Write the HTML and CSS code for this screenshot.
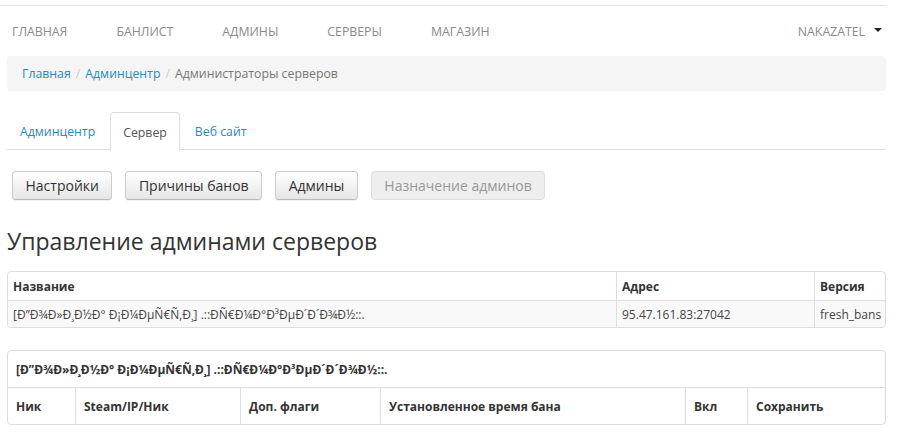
FILE: index.html
```html
<!DOCTYPE html>
<html lang="ru">
<head>
<meta charset="utf-8">
<title>Управление админами серверов</title>
<link rel="stylesheet" href="styles.css">
</head>
<body>
<div class="navbar">
  <ul class="nav-left">
    <li>ГЛАВНАЯ</li>
    <li>БАНЛИСТ</li>
    <li>АДМИНЫ</li>
    <li>СЕРВЕРЫ</li>
    <li>МАГАЗИН</li>
  </ul>
  <div class="nav-user">NAKAZATEL <span class="caret"></span></div>
</div>
<div class="page">
  <div class="breadcrumb">
    <a href="#">Главная</a><span class="sep">/</span><a href="#">Админцентр</a><span class="sep">/</span><span class="active">Администраторы серверов</span>
  </div>
  <ul class="tabs">
    <li><a href="#">Админцентр</a></li>
    <li class="on"><span>Сервер</span></li>
    <li><a href="#">Веб сайт</a></li>
  </ul>
  <div class="btns">
    <span class="btn">Настройки</span>
    <span class="btn">Причины банов</span>
    <span class="btn">Админы</span>
    <span class="btn disabled">Назначение админов</span>
  </div>
  <h1>Управление админами серверов</h1>
  <table class="t1">
    <colgroup><col class="c-name"><col class="c-addr"><col></colgroup>
    <thead>
      <tr><th>Название</th><th>Адрес</th><th>Версия</th></tr>
    </thead>
    <tbody>
      <tr><td>[Ð”Ð¾Ð»Ð¸Ð½Ð° Ð¡Ð¼ÐµÑ€Ñ‚Ð¸] .::ÐÑ€Ð¼Ð°Ð³ÐµÐ´Ð´Ð¾Ð½::.</td><td>95.47.161.83:27042</td><td>fresh_bans</td></tr>
    </tbody>
  </table>
  <div class="panel">
    <div class="panel-title">[Ð”Ð¾Ð»Ð¸Ð½Ð° Ð¡Ð¼ÐµÑ€Ñ‚Ð¸] .::ÐÑ€Ð¼Ð°Ð³ÐµÐ´Ð´Ð¾Ð½::.</div>
    <table class="t2">
      <tr>
        <th class="w1">Ник</th>
        <th class="w2">Steam/IP/Ник</th>
        <th class="w3">Доп. флаги</th>
        <th class="w4">Установленное время бана</th>
        <th class="w5">Вкл</th>
        <th>Сохранить</th>
      </tr>
    </table>
  </div>
</div>
</body>
</html>
```
FILE: styles.css
```css
html, body {
  margin: 0;
  padding: 0;
  background: #fff;
  font-family: "Open Sans", "Liberation Sans", sans-serif;
  color: #333;
}
a { text-decoration: none; color: #2a8ab8; }

.navbar {
  margin-top: 5px;
  width: 887px;
  height: 50px;
  border-top: 1px solid #e3e3e3;
  display: flex;
  justify-content: space-between;
  align-items: center;
}
.nav-left {
  list-style: none;
  margin: 0;
  padding: 0 0 0 12px;
  display: flex;
  gap: 49px;
}
.nav-left li, .nav-user {
  font-size: 12.3px;
  color: #8a8a8a;
}
.nav-user {
  padding-right: 5px;
  display: flex;
  align-items: center;
}
.caret {
  display: inline-block;
  margin-left: 9px;
  width: 0;
  height: 0;
  border-left: 4px solid transparent;
  border-right: 4px solid transparent;
  border-top: 4px solid #222;
  margin-top: -3px;
}

.page {
  margin-left: 7px;
  width: 879px;
}
.breadcrumb {
  background: #f5f5f5;
  border-radius: 4px;
  height: 35px;
  display: flex;
  align-items: center;
  padding-left: 15px;
  font-size: 12.3px;
}
.breadcrumb .sep {
  color: #ccc;
  padding: 0 5px;
}
.breadcrumb .active { color: #777; }

.tabs {
  list-style: none;
  margin: 21px 0 0;
  padding: 0;
  display: flex;
  border-bottom: 1px solid #ddd;
  height: 37px;
  font-size: 12.3px;
}
.tabs li {
  height: 37px;
  display: flex;
  align-items: center;
  padding: 0 12px;
  margin-right: 2px;
  border: 1px solid transparent;
  border-bottom: none;
  border-radius: 4px 4px 0 0;
}
.tabs li.on {
  border-color: #ddd;
  background: #fff;
  height: 38px;
  margin-bottom: -1px;
  color: #555;
  padding: 0 12px;
}

.btns {
  display: flex;
  gap: 13px;
  margin: 21px 0 0 5px;
}
.btn {
  display: inline-block;
  font-size: 14px;
  color: #333;
  height: 27px;
  line-height: 27px;
  padding: 0 12.5px;
  border: 1px solid #ccc;
  border-bottom-color: #b8b8b8;
  border-radius: 4px;
  background: linear-gradient(#fff, #e6e6e6);
  box-shadow: 0 1px 1px rgba(0,0,0,0.06);
}
.btn.disabled {
  color: #999;
  background: #eee;
  border-color: #ddd;
  box-shadow: none;
}

h1 {
  font-size: 23px;
  font-weight: 400;
  color: #333;
  margin: 25px 0 0;
  line-height: 33px;
}

table {
  border-collapse: separate;
  border-spacing: 0;
  width: 100%;
  font-size: 12px;
}
.t1 {
  table-layout: fixed;
  margin-top: 13px;
  border: 1px solid #ddd;
  border-radius: 4px;
}
.t1 th, .t1 td {
  text-align: left;
  padding: 0 5px;
  height: 28px;
  border-left: 1px solid #ddd;
  color: #333;
  white-space: nowrap;
  overflow: hidden;
}
.t1 th { font-weight: 700; }
.t1 th:first-child, .t1 td:first-child { border-left: none; }
.t1 td {
  border-top: 1px solid #ddd;
  background: #f9f9f9;
  color: #444;
  height: 26px;
}
.t1 tr:last-child td:first-child { border-bottom-left-radius: 4px; }
.t1 tr:last-child td:last-child { border-bottom-right-radius: 4px; }
.c-name { width: 608px; }
.c-addr { width: 198px; }

.panel {
  margin-top: 22px;
  border: 1px solid #ddd;
  border-radius: 4px;
}
.panel-title {
  height: 36px;
  display: flex;
  align-items: center;
  padding-left: 8px;
  font-size: 12px;
  font-weight: 700;
  color: #333;
  border-bottom: 1px solid #ddd;
}
.t2 th {
  text-align: left;
  font-weight: 700;
  height: 36px;
  padding: 0 8px;
  border-left: 1px solid #ddd;
  color: #333;
}
.t2 th:first-child { border-left: none; }
.w1 { width: 51px; }
.w2 { width: 148px; }
.w3 { width: 123px; }
.w4 { width: 288px; }
.w5 { width: 45px; }
```
